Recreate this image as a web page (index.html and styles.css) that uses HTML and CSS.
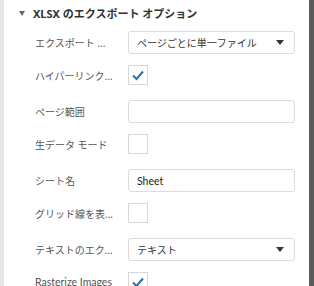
FILE: index.html
```html
<!DOCTYPE html>
<html lang="ja">
<head>
<meta charset="utf-8">
<link rel="stylesheet" href="styles.css">
</head>
<body>
<div class="frame">
  <div class="edge"></div>
  <div class="panel">
    <div class="header">
      <span class="caret"></span>
      <span class="title">XLSX のエクスポート オプション</span>
    </div>
    <div class="rows">
      <div class="row">
        <div class="label">エクスポート ...</div>
        <div class="select"><span>ページごとに単一ファイル</span><span class="arrow"></span></div>
      </div>
      <div class="row cbrow">
        <div class="label">ハイパーリンク...</div>
        <div class="check checked">
          <svg viewBox="0 0 20 20" width="20" height="20"><path d="M5 10.5 L8.5 14 L15 6.5" fill="none" stroke="#2f6ea6" stroke-width="2"/></svg>
        </div>
      </div>
      <div class="row">
        <div class="label">ページ範囲</div>
        <div class="input"></div>
      </div>
      <div class="row cbrow">
        <div class="label">生データ モード</div>
        <div class="check"></div>
      </div>
      <div class="row">
        <div class="label">シート名</div>
        <div class="input"><span class="value latin">Sheet</span></div>
      </div>
      <div class="row cbrow">
        <div class="label">グリッド線を表...</div>
        <div class="check"></div>
      </div>
      <div class="row">
        <div class="label">テキストのエク...</div>
        <div class="select"><span>テキスト</span><span class="arrow"></span></div>
      </div>
      <div class="row cbrow">
        <div class="label latin">Rasterize Images</div>
        <div class="check checked">
          <svg viewBox="0 0 20 20" width="20" height="20"><path d="M5 10.5 L8.5 14 L15 6.5" fill="none" stroke="#2f6ea6" stroke-width="2"/></svg>
        </div>
      </div>
    </div>
  </div>
  <div class="scroll"></div>
</div>
</body>
</html>
```
FILE: styles.css
```css
html, body {
  margin: 0;
  padding: 0;
  background: #fff;
}
body {
  font-family: "Noto Sans", "Noto Sans CJK JP", sans-serif;
  font-size: 10px;
  color: #444;
}
.frame {
  display: flex;
  width: 314px;
  height: 286px;
  overflow: hidden;
}
.edge {
  width: 4px;
  flex: none;
  background: #e6e6e6;
}
.panel {
  flex: 1;
  min-width: 0;
}
.scroll {
  width: 5px;
  flex: none;
  background: #5b5b5b;
}
.header {
  display: flex;
  align-items: center;
  height: 26px;
  padding-left: 15px;
}
.caret {
  width: 0;
  height: 0;
  border-left: 3px solid transparent;
  border-right: 3px solid transparent;
  border-top: 5px solid #666;
  margin-right: 8px;
  margin-top: 1px;
}
.title {
  font-weight: bold;
  color: #333;
  font-size: 11px;
}
.rows {
  display: flex;
  flex-direction: column;
  gap: 11px;
  padding-top: 5px;
}
.row {
  display: flex;
  align-items: center;
  height: 23px;
}
.cbrow {
  height: 20px;
  margin-bottom: 4px;
}
.label {
  width: 93px;
  padding-left: 31px;
  flex: none;
  white-space: nowrap;
  overflow: hidden;
  color: #555;
}
.latin {
  font-family: "Lato", "Noto Sans", sans-serif;
  font-size: 10.5px;
}
.select, .input {
  box-sizing: border-box;
  width: 167px;
  height: 23px;
  border: 1px solid #dcdcdc;
  border-radius: 3px;
  display: flex;
  align-items: center;
  justify-content: space-between;
  padding: 0 8px;
  color: #333;
}
.select span:first-child {
  white-space: nowrap;
}
.arrow {
  width: 0;
  height: 0;
  border-left: 4px solid transparent;
  border-right: 4px solid transparent;
  border-top: 5px solid #333;
  margin-right: 2px;
}
.value {
  color: #222;
}
.check {
  box-sizing: border-box;
  width: 20px;
  height: 20px;
  border: 1px solid #d6d6d6;
  background: #fff;
  position: relative;
}
.check svg {
  position: absolute;
  left: -1px;
  top: -1px;
}
```
